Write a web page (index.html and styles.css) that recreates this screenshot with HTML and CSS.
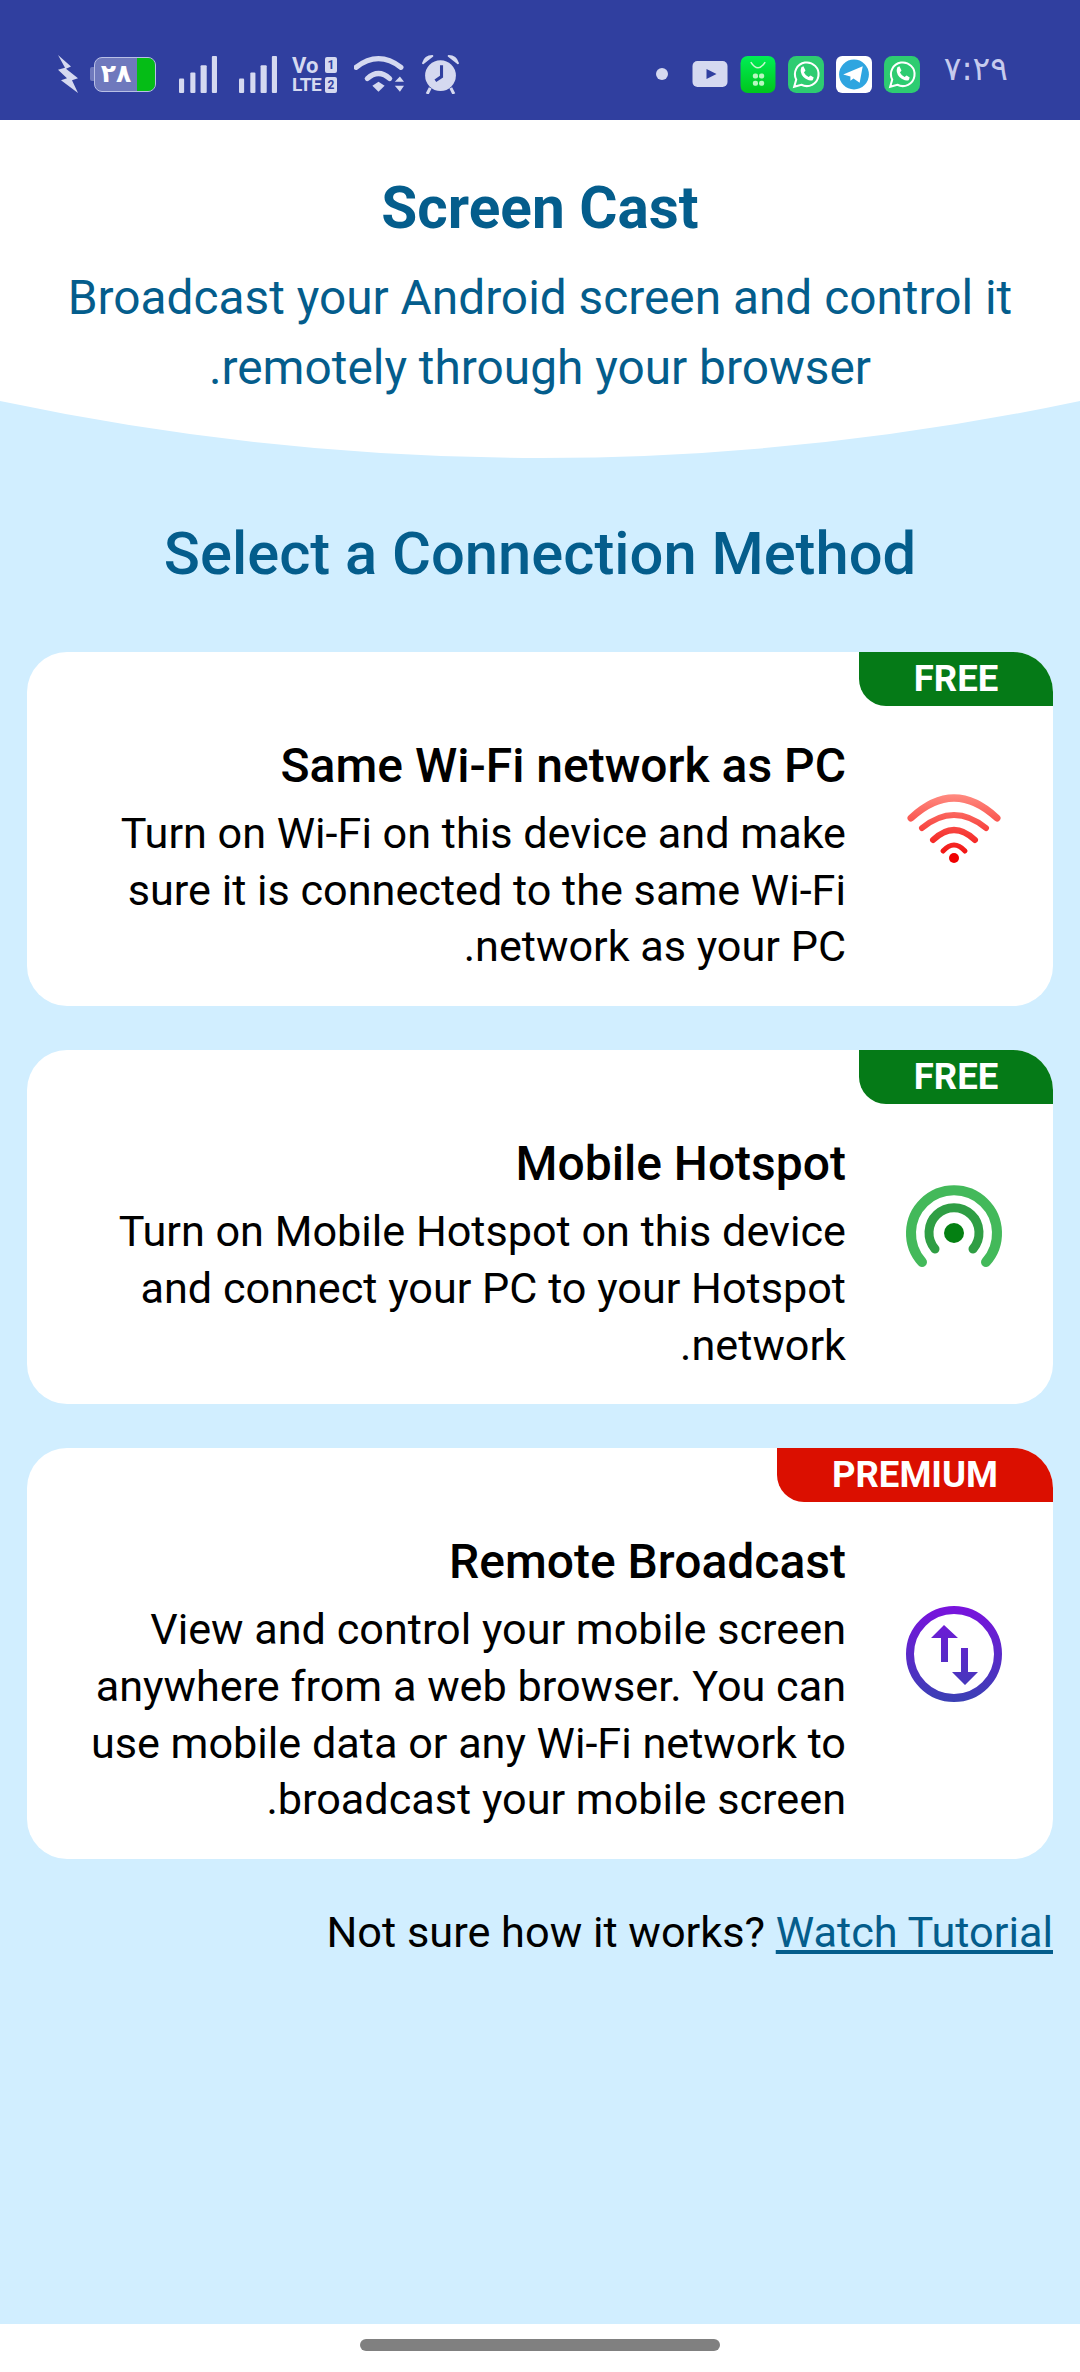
FILE: index.html
```html
<!DOCTYPE html>
<html lang="en">
<head>
    <meta charset="UTF-8">
    <meta name="viewport" content="width=device-width, initial-scale=1.0">
    <title>Screen Cast</title>
    <link rel="stylesheet" href="styles.css">
</head>
<body>
    <div class="status-bar">
        <div class="status-group">
            <svg width="20" height="38" viewBox="0 0 20 36" preserveAspectRatio="none"><path d="M0 0 L13 11 L8 13 L20 22 L14 24 L20 36 L3 24 L9 22 L0 14 L7 12 Z" fill="#d5d9f0"/></svg>
            <div class="st-battery">
                <span class="st-battery-nub"></span>
                <div class="st-battery-body"><span class="st-battery-level">۲۸</span><span class="st-battery-fill"></span></div>
            </div>
            <svg class="st-signal" width="38" height="37" viewBox="0 0 37 36"><g fill="#d5d9f0"><rect x="0" y="22" width="5" height="14" rx="1"/><rect x="11" y="16" width="5" height="20" rx="1"/><rect x="21" y="9" width="6" height="27" rx="1"/><rect x="32" y="0" width="5" height="36" rx="1"/></g></svg>
            <svg class="st-signal-2" width="38" height="37" viewBox="0 0 37 36"><g fill="#d5d9f0"><rect x="0" y="22" width="5" height="14" rx="1"/><rect x="11" y="16" width="5" height="20" rx="1"/><rect x="21" y="9" width="6" height="27" rx="1"/><rect x="32" y="0" width="5" height="36" rx="1"/></g></svg>
            <div class="st-volte">
                <span class="st-vo">Vo</span><span class="st-sim">1</span>
                <span class="st-lte">LTE</span><span class="st-sim">2</span>
            </div>
            <svg class="st-wifi" width="50" height="37" viewBox="0 0 49 36">
                <g fill="none" stroke="#d5d9f0" stroke-width="5" stroke-linecap="round">
                    <path d="M2 11 Q24 -6 46 11"/>
                    <path d="M13 22 Q24 12 35 22"/>
                </g>
                <path d="M18 29 L24 25 L30 29 L24 35 Z" fill="#d5d9f0"/>
                <path d="M40 25 L45 20 L49 25 Z M40 29 L49 29 L45 35 Z" fill="#d5d9f0"/>
            </svg>
            <svg class="st-alarm" width="37" height="39" viewBox="0 0 36 38">
                <circle cx="18" cy="20" r="15" fill="#d5d9f0"/>
                <path d="M1 8 Q3 1 10 1 Z M35 8 Q33 1 26 1 Z" fill="#d5d9f0" stroke="#d5d9f0" stroke-width="2" stroke-linejoin="round"/>
                <path d="M8 32 L5 38 M28 32 L31 38" stroke="#d5d9f0" stroke-width="3"/>
                <path d="M19 10 L19 21 L13 25" fill="none" stroke="#303f9f" stroke-width="3"/>
            </svg>
        </div>
        <div class="status-group">
            <span class="st-dot"></span>
            <svg class="st-yt" width="36" height="26" viewBox="0 0 35 26"><rect width="35" height="26" rx="5" fill="#d5d9f0"/><path d="M14 8 L24 13 L14 18 Z" fill="#303f9f"/></svg>
            <svg class="st-app" width="36" height="37" viewBox="0 0 34 36">
                <defs><linearGradient id="storeBg" x1="0" y1="0" x2="0" y2="1"><stop offset="0" stop-color="#00ee55"/><stop offset="1" stop-color="#00c51c"/></linearGradient></defs>
                <rect width="34" height="36" rx="7" fill="url(#storeBg)"/>
                <path d="M10 6 Q17 17 24 6" fill="none" stroke="#c8f8d0" stroke-width="1.5"/>
                <g fill="#b8f8c0"><rect x="12" y="17" width="5" height="5" rx="2"/><rect x="18" y="17" width="5" height="5" rx="2"/><rect x="12" y="24" width="5" height="5" rx="2"/><rect x="18" y="24" width="5" height="5" rx="2"/></g>
            </svg>
            <svg class="st-app" width="36" height="37" viewBox="0 0 35 36">
                <rect width="35" height="36" rx="8" fill="#2ecc71"/>
                <path d="M6 30 L8 23 A11.500 11.500 0 1 1 13 28 Z" fill="none" stroke="#fff" stroke-width="2"/>
                <path d="M13 11 L15 10 L17 14 L15.500 16 Q17 19 20 20.500 L22 19 L25 21 L24 23.500 Q20 25 15 20.500 Q11 16 13 11 Z" fill="#fff"/>
            </svg>
            <svg class="st-app" width="36" height="37" viewBox="0 0 35 36">
                <rect width="35" height="36" rx="6" fill="#fff"/>
                <circle cx="17.500" cy="18" r="14.500" fill="#2fa5e0"/>
                <path d="M7 18 L26 10 L23 26 L17 22 L14 24 L14 20 Z" fill="#fff"/>
            </svg>
            <svg class="st-app" width="36" height="37" viewBox="0 0 35 36">
                <rect width="35" height="36" rx="8" fill="#2ecc71"/>
                <path d="M6 30 L8 23 A11.500 11.500 0 1 1 13 28 Z" fill="none" stroke="#fff" stroke-width="2"/>
                <path d="M13 11 L15 10 L17 14 L15.500 16 Q17 19 20 20.500 L22 19 L25 21 L24 23.500 Q20 25 15 20.500 Q11 16 13 11 Z" fill="#fff"/>
            </svg>
            <span class="st-time">۷:۲۹</span>
        </div>
    </div>

    <div class="page" dir="rtl">
        <div class="header">
            <h1>Screen Cast</h1>
            <p>Broadcast your Android screen and control it remotely through your browser.</p>
        </div>
        <svg class="curve" width="1080" height="58" viewBox="0 0 1080 58" preserveAspectRatio="none"><path d="M0 0 Q540 114 1080 0 Z" fill="#fff"/></svg>

        <h2>Select a Connection Method</h2>

        <div class="card">
            <span class="badge badge-free">FREE</span>
            <svg class="card-icon" width="98" height="98" viewBox="0 0 98 98">
                <defs><linearGradient id="wifiGrad" gradientUnits="userSpaceOnUse" x1="0" y1="15" x2="0" y2="83"><stop offset="0" stop-color="#ff8a80"/><stop offset="1" stop-color="#f00000"/></linearGradient></defs>
                <g fill="none" stroke="url(#wifiGrad)" stroke-linecap="round">
                    <path d="M6 38 Q49 -2 92 38" stroke-width="7"/>
                    <path d="M17 48 Q49 22 81 48" stroke-width="6"/>
                    <path d="M28 60 Q49 40 70 60" stroke-width="6"/>
                    <path d="M38 71 Q49 59 60 71" stroke-width="5"/>
                </g>
                <circle cx="49" cy="78" r="5" fill="#f00000"/>
            </svg>
            <div class="card-text">
                <h3>Same Wi-Fi network as PC</h3>
                <p>Turn on Wi-Fi on this device and make sure it is connected to the same Wi-Fi network as your PC.</p>
            </div>
        </div>

        <div class="card">
            <span class="badge badge-free">FREE</span>
            <svg class="card-icon" width="98" height="98" viewBox="0 0 98 98">
                <g fill="none" stroke-linecap="round">
                    <path d="M17 84 A43 43 0 1 1 81 84" stroke="#43b95a" stroke-width="10"/>
                    <path d="M30 71 A25 25 0 1 1 68 71" stroke="#2f9e44" stroke-width="9"/>
                </g>
                <circle cx="49" cy="55" r="10" fill="#048012"/>
            </svg>
            <div class="card-text">
                <h3>Mobile Hotspot</h3>
                <p>Turn on Mobile Hotspot on this device and connect your PC to your Hotspot network.</p>
            </div>
        </div>

        <div class="card">
            <span class="badge badge-premium">PREMIUM</span>
            <svg class="card-icon" width="98" height="98" viewBox="0 0 98 98">
                <defs><linearGradient id="remoteGrad" gradientUnits="userSpaceOnUse" x1="0" y1="1" x2="0" y2="97"><stop offset="0" stop-color="#7a12de"/><stop offset="1" stop-color="#3a40b4"/></linearGradient></defs>
                <circle cx="49" cy="49" r="44" fill="none" stroke="url(#remoteGrad)" stroke-width="8"/>
                <path d="M39 20 L53 33 L43 33 L43 57 L36 57 L36 33 L26 33 Z M56 43 L63 43 L63 67 L73 67 L60 80 L47 67 L56 67 Z" fill="url(#remoteGrad)"/>
            </svg>
            <div class="card-text">
                <h3>Remote Broadcast</h3>
                <p>View and control your mobile screen anywhere from a web browser. You can use mobile data or any Wi-Fi network to broadcast your mobile screen.</p>
            </div>
        </div>

        <div class="tutorial" dir="ltr">Not sure how it works? <a href="#">Watch Tutorial</a></div>
    </div>

    <div class="nav-bar"><span class="nav-handle"></span></div>
</body>
</html>
```

FILE: styles.css
```css
html, body {
    margin: 0;
    padding: 0;
}

body {
    width: 1080px;
    height: 2372px;
    display: flex;
    flex-direction: column;
    overflow: hidden;
    background-color: #fff;
    font-family: Roboto, "Noto Sans", sans-serif;
    color: #000;
}

/* status bar */
.status-bar {
    height: 120px;
    flex: none;
    display: flex;
    justify-content: space-between;
    align-items: center;
    padding: 28px 72px 0 58px;
    box-sizing: border-box;
    background-color: #303f9f;
}

.status-group {
    display: flex;
    align-items: center;
}

.status-group svg {
    display: block;
}

.st-battery {
    margin-left: 12px;
    display: flex;
    align-items: center;
}

.st-battery-nub {
    width: 4px;
    height: 14px;
    background-color: #6f79bd;
    border-radius: 2px 0 0 2px;
}

.st-battery-body {
    width: 62px;
    height: 35px;
    display: flex;
    box-sizing: border-box;
    border: 1px solid #b9c0e6;
    border-radius: 8px;
    overflow: hidden;
    background-color: #6f79bd;
}

.st-battery-level {
    flex: 1;
    text-align: center;
    font: bold 25px/32px "DejaVu Sans", sans-serif;
    color: #fff;
}

.st-battery-fill {
    width: 18px;
    background-color: #05bd16;
}

.st-signal {
    margin-left: 23px;
}

.st-signal-2 {
    margin-left: 22px;
}

.st-volte {
    width: 45px;
    margin-left: 15px;
    display: grid;
    grid-template-columns: 1fr 12px;
    row-gap: 2px;
    align-items: center;
    color: #d5d9f0;
    font-weight: bold;
}

.st-vo {
    font-size: 22px;
    line-height: 19px;
}

.st-lte {
    font-size: 19px;
    line-height: 16px;
    letter-spacing: -0.5px;
}

.st-sim {
    height: 16px;
    font-size: 12px;
    line-height: 16px;
    text-align: center;
    color: #303f9f;
    background-color: #d5d9f0;
    border-radius: 2px;
}

.st-wifi {
    margin-left: 17px;
}

.st-alarm {
    margin-left: 18px;
}

.st-dot {
    width: 12px;
    height: 12px;
    border-radius: 50%;
    background-color: #d5d9f0;
}

.st-yt {
    margin-left: 24px;
}

.st-app {
    margin-left: 12px;
}

.st-time {
    margin-left: 24px;
    margin-top: -10px;
    font: 33px/36px "DejaVu Sans", sans-serif;
    color: #c6cbee;
}

/* page */
.page {
    flex: 1;
    background-color: #d1eeff;
}

.header {
    height: 281px;
    box-sizing: border-box;
    padding: 58px 40px 0;
    background-color: #fff;
    text-align: center;
    color: #045d8c;
}

.header h1 {
    margin: 0;
    font-size: 58.5px;
    line-height: 60px;
    font-weight: 700;
}

.header p {
    margin: 25px 0 0;
    font-size: 47.8px;
    line-height: 70px;
}

.curve {
    display: block;
}

h2 {
    margin: 58px 0 61px;
    text-align: center;
    font-size: 59.7px;
    line-height: 74px;
    font-weight: 500;
    color: #045d8c;
}

/* connection cards */
.card {
    position: relative;
    margin: 0 27px 44px;
    padding: 86px 50px 30px 50px;
    display: flex;
    align-items: center;
    gap: 59px;
    background-color: #fff;
    border-radius: 40px;
}

.card-icon {
    flex: none;
    display: block;
    margin-top: -56px;
}

.card-text {
    flex: 1;
}

.card-text h3 {
    margin: 0 0 12px;
    font-size: 48px;
    line-height: 56px;
    font-weight: 500;
}

.card-text p {
    margin: 0;
    font-size: 43.2px;
    line-height: 56.7px;
}

.badge {
    position: absolute;
    top: 0;
    right: 0;
    height: 54px;
    line-height: 54px;
    text-align: center;
    font-size: 36.5px;
    font-weight: 700;
    color: #fff;
    border-radius: 0 40px 0 27px;
}

.badge-free {
    width: 194px;
    background-color: #057a17;
}

.badge-premium {
    width: 276px;
    background-color: #db0f00;
}

.tutorial {
    margin: 0 27px;
    text-align: right;
    font-size: 43.3px;
    line-height: 60px;
}

.tutorial a {
    color: #045d8c;
}

/* bottom bar */
.nav-bar {
    height: 48px;
    flex: none;
    display: flex;
    justify-content: center;
    align-items: center;
    background-color: #fff;
}

.nav-handle {
    width: 360px;
    height: 12px;
    margin-top: -6px;
    border-radius: 6px;
    background-color: #808080;
}
```
